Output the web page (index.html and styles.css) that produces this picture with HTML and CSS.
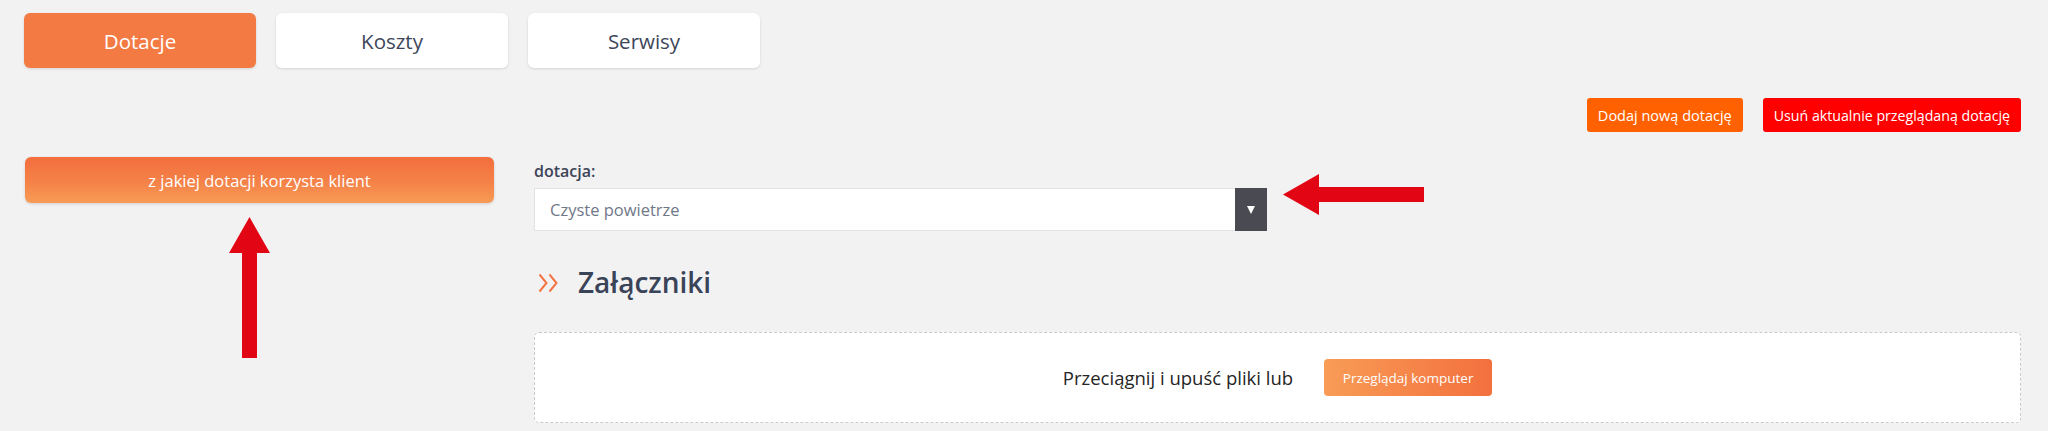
FILE: index.html
```html
<!DOCTYPE html>
<html lang="pl">
<head>
<meta charset="utf-8">
<title>Dotacje</title>
<link rel="stylesheet" href="styles.css">
</head>
<body>
<div class="page">
  <nav class="tabs">
    <div class="tab tab-active">Dotacje</div>
    <div class="tab">Koszty</div>
    <div class="tab">Serwisy</div>
  </nav>

  <div class="actions">
    <div class="btn btn-add">Dodaj nową dotację</div>
    <div class="btn btn-del">Usuń aktualnie przeglądaną dotację</div>
  </div>

  <div class="main">
    <aside class="side">
      <div class="side-bar">z jakiej dotacji korzysta klient</div>
      <svg class="arrow-up" width="41" height="141" viewBox="0 0 41 141"><polygon points="20.5,0 41,36 28,36 28,141 13,141 13,36 0,36"/></svg>
    </aside>

    <section class="content">
      <div class="field-label">dotacja:</div>
      <div class="select">
        <span class="select-value">Czyste powietrze</span>
        <span class="select-caret"><span class="caret-tri"></span></span>
      </div>
      <svg class="arrow-left" width="141" height="41" viewBox="0 0 141 41"><polygon points="0,20.5 36,0 36,13 141,13 141,28 36,28 36,41"/></svg>

      <h2 class="section-title">
        <svg class="chevrons" width="21" height="20" viewBox="0 0 21 20"><polyline points="1.5,1.5 8.5,10 1.5,18.5"/><polyline points="11.5,1.5 18.5,10 11.5,18.5"/></svg>
        <span>Załączniki</span>
      </h2>

      <div class="dropzone">
        <span class="drop-text">Przeciągnij i upuść pliki lub</span>
        <div class="btn-browse">Przeglądaj komputer</div>
      </div>
    </section>
  </div>
</div>
</body>
</html>
```

FILE: styles.css
```css
* {
  box-sizing: border-box;
}

html, body {
  margin: 0;
  padding: 0;
  background: #f2f2f2;
  font-family: "Open Sans", "Noto Sans", "DejaVu Sans", sans-serif;
}

.page {
  padding: 13px 27px 0 24px;
  min-height: 431px;
}

/* Tabs */
.tabs {
  display: flex;
  gap: 20px;
}

.tab {
  width: 232px;
  height: 55px;
  display: flex;
  align-items: center;
  justify-content: center;
  background: #ffffff;
  border-radius: 6px;
  box-shadow: 0 1px 3px rgba(0, 0, 0, 0.12);
  color: #3d4659;
  font-size: 20.5px;
}

.tab-active {
  background: #f47a44;
  color: #ffffff;
}

/* Action buttons */
.actions {
  margin-top: 30px;
  display: flex;
  justify-content: flex-end;
  gap: 20px;
}

.btn {
  height: 34px;
  padding: 0 11px;
  display: flex;
  align-items: center;
  border-radius: 3px;
  color: #ffffff;
  font-size: 14.5px;
}

.btn-add {
  background: #ff6100;
}

.btn-del {
  background: #ff0000;
  padding: 0 11px;
  font-size: 14.2px;
}

/* Main layout */
.main {
  margin-top: 25px;
  display: grid;
  grid-template-columns: 470px 1fr;
  gap: 40px;
}

.side {
  position: relative;
  padding-left: 1px;
}

.side-bar {
  height: 46px;
  display: flex;
  align-items: center;
  justify-content: center;
  border-radius: 6px;
  background: linear-gradient(180deg, #f36e3d 0%, #f48248 55%, #f89b56 100%);
  box-shadow: 0 1px 3px rgba(0, 0, 0, 0.15);
  color: #ffffff;
  font-size: 16.5px;
}

.arrow-up {
  position: absolute;
  left: 205px;
  top: 60px;
  fill: #e20614;
}

.content {
  position: relative;
}

.field-label {
  margin: 4px 0 7px;
  line-height: 20px;
  font-size: 16px;
  font-weight: 600;
  color: #3d4459;
}

.select {
  width: 733px;
  height: 43px;
  display: flex;
  align-items: stretch;
  background: #ffffff;
  border: 1px solid #e2e2e2;
}

.select-value {
  flex: 1;
  display: flex;
  align-items: center;
  padding-left: 15px;
  font-size: 16.5px;
  color: #707888;
}

.select-caret {
  width: 32px;
  margin: -1px -1px -1px 0;
  display: flex;
  align-items: center;
  justify-content: center;
  background: #4a4a53;
}

.caret-tri {
  width: 0;
  height: 0;
  border-left: 4.5px solid transparent;
  border-right: 4.5px solid transparent;
  border-top: 8px solid #ffffff;
}

.arrow-left {
  position: absolute;
  left: 749px;
  top: 17px;
  fill: #e20614;
}

.section-title {
  margin: 33px 0 32px;
  height: 36px;
  display: flex;
  align-items: center;
  gap: 19px;
  padding-left: 4px;
  font-size: 28px;
  line-height: 36px;
  font-weight: 600;
  color: #3a4459;
}

.chevrons {
  fill: none;
  stroke: #f47544;
  stroke-width: 2;
  margin-top: 1px;
}

.dropzone {
  height: 91px;
  display: flex;
  align-items: center;
  justify-content: center;
  gap: 31px;
  background: #ffffff;
  border: 1px dashed #c9c9c9;
  border-radius: 5px;
}

.drop-text {
  font-size: 18.5px;
  color: #252525;
}

.btn-browse {
  width: 168px;
  height: 37px;
  display: flex;
  align-items: center;
  justify-content: center;
  border-radius: 4px;
  background: linear-gradient(90deg, #f89c56 0%, #f3703e 100%);
  color: #ffffff;
  font-size: 13.5px;
}
```
